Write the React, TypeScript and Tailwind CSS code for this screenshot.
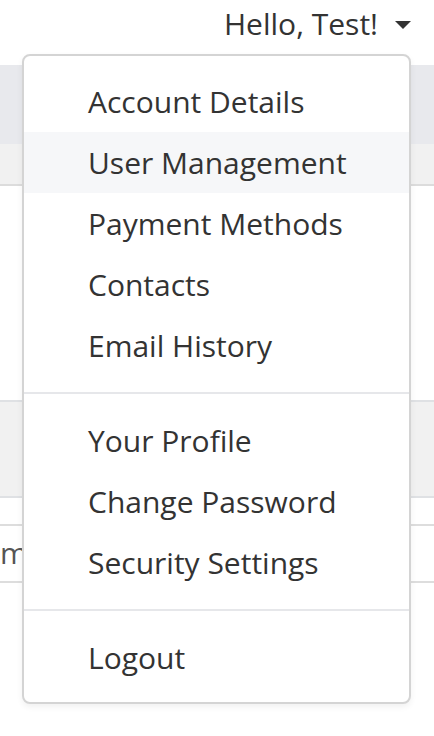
import React from 'react';

const groups: string[][] = [
  ['Account Details', 'User Management', 'Payment Methods', 'Contacts', 'Email History'],
  ['Your Profile', 'Change Password', 'Security Settings'],
  ['Logout'],
];

function Caret() {
  return (
    <svg width="16" height="8" viewBox="0 0 16 8" className="block">
      <path d="M0 0 L16 0 L8 8 Z" fill="#333" />
    </svg>
  );
}

function UserMenu() {
  return (
    <div className="absolute left-[22px] top-[54px] w-[389px] rounded-[8px] border-2 border-[#d4d4d4] bg-white pt-[15px] pb-[14px] shadow-[0_3px_6px_rgba(0,0,0,0.06)]">
      {groups.map((items, gi) => (
        <div key={gi}>
          {gi > 0 && <div className="my-[16px] h-[2px] bg-[#e6e7ea]" />}
          {items.map((label) => (
            <div
              key={label}
              className={
                'flex h-[61px] items-center pl-[64px] text-[30px] leading-[40px] text-[#333] ' +
                (label === 'User Management' ? 'bg-[#f6f7f9]' : '')
              }
            >
              {label}
            </div>
          ))}
        </div>
      ))}
    </div>
  );
}

export default function App() {
  return (
    <div className="relative h-[736px] w-[434px] overflow-hidden bg-white font-['Open_Sans',sans-serif] text-[#333]">
      <div className="flex h-[65px] items-start justify-end pr-[23px] pt-[4px]">
        <span className="text-[30px] leading-[40px]">Hello, Test!</span>
        <span className="ml-[17px] mt-[17px]">
          <Caret />
        </span>
      </div>
      <div className="h-[79px] bg-[#e8e9ed]" />
      <div className="h-[42px] border-b-2 border-[#dcdcdc] bg-[#f1f1f1]" />
      <div className="h-[214px]" />
      <div className="h-[98px] border-y-2 border-[#dfe1e4] bg-[#f1f1f1]" />
      <div className="h-[26px]" />
      <div className="h-[59px] border-y-2 border-[#dddddd] pt-[7px] text-[30px] leading-[40px] text-[#555]">
        m
      </div>
      <UserMenu />
    </div>
  );
}
